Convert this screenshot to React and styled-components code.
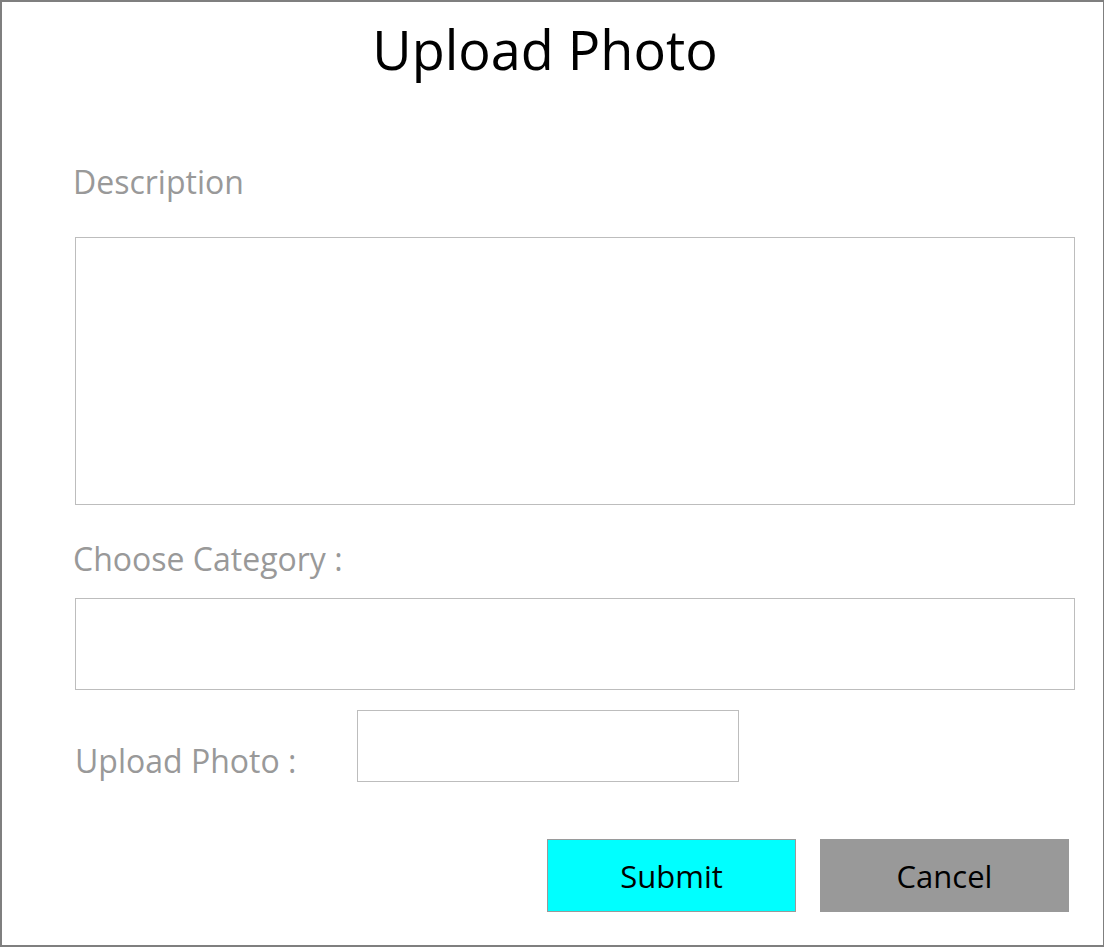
import React from 'react';
import styled, { createGlobalStyle } from 'styled-components';

const Global = createGlobalStyle`
  body {
    margin: 0;
    background: #fff;
    font-family: "Open Sans", "Noto Sans", sans-serif;
  }
`;

const Frame = styled.div`
  box-sizing: border-box;
  width: 1104px;
  height: 947px;
  border: 2px solid #7f7f7f;
  border-right-width: 1px;
  display: flex;
  flex-direction: column;
  padding: 0 28px 0 73px;
`;

const Title = styled.h1`
  margin: 15px 0 0;
  padding-right: 60px;
  text-align: center;
  font-weight: 400;
  font-size: 54px;
  line-height: 64px;
  color: #000;
`;

const Label = styled.div`
  color: #999;
  font-size: 32px;
  line-height: 40px;
  margin-left: -2px;
  margin-top: ${({ top }) => top}px;
`;

const Box = styled.div`
  box-sizing: border-box;
  border: 1px solid #bdbdbd;
  height: ${({ h }) => h}px;
  margin-top: ${({ top }) => top}px;
`;

const UploadRow = styled.div`
  display: flex;
  align-items: flex-end;
  margin-top: 20px;
`;

const UploadLabel = styled(Label)`
  width: 282px;
  margin-left: 0;
  margin-bottom: 1px;
`;

const FileBox = styled.div`
  box-sizing: border-box;
  width: 382px;
  height: 72px;
  border: 1px solid #bdbdbd;
`;

const Actions = styled.div`
  display: flex;
  justify-content: flex-end;
  gap: 24px;
  margin-top: 57px;
  margin-right: 6px;
`;

const Button = styled.button`
  box-sizing: border-box;
  width: 249px;
  height: 73px;
  border: 1px solid ${({ primary }) => (primary ? '#9a9a9a' : '#999')};
  background: ${({ primary }) => (primary ? '#00ffff' : '#999999')};
  color: #000;
  font-family: "Open Sans", "Noto Sans", sans-serif;
  font-size: 31px;
  padding: 0;
  cursor: pointer;
`;

export default function App() {
  return (
    <>
      <Global />
      <Frame>
        <Title>Upload Photo</Title>
        <Label top={81}>Description</Label>
        <Box h={268} top={35} />
        <Label top={34}>Choose Category :</Label>
        <Box h={92} top={19} />
        <UploadRow>
          <UploadLabel>Upload Photo :</UploadLabel>
          <FileBox />
        </UploadRow>
        <Actions>
          <Button primary>Submit</Button>
          <Button>Cancel</Button>
        </Actions>
      </Frame>
    </>
  );
}
